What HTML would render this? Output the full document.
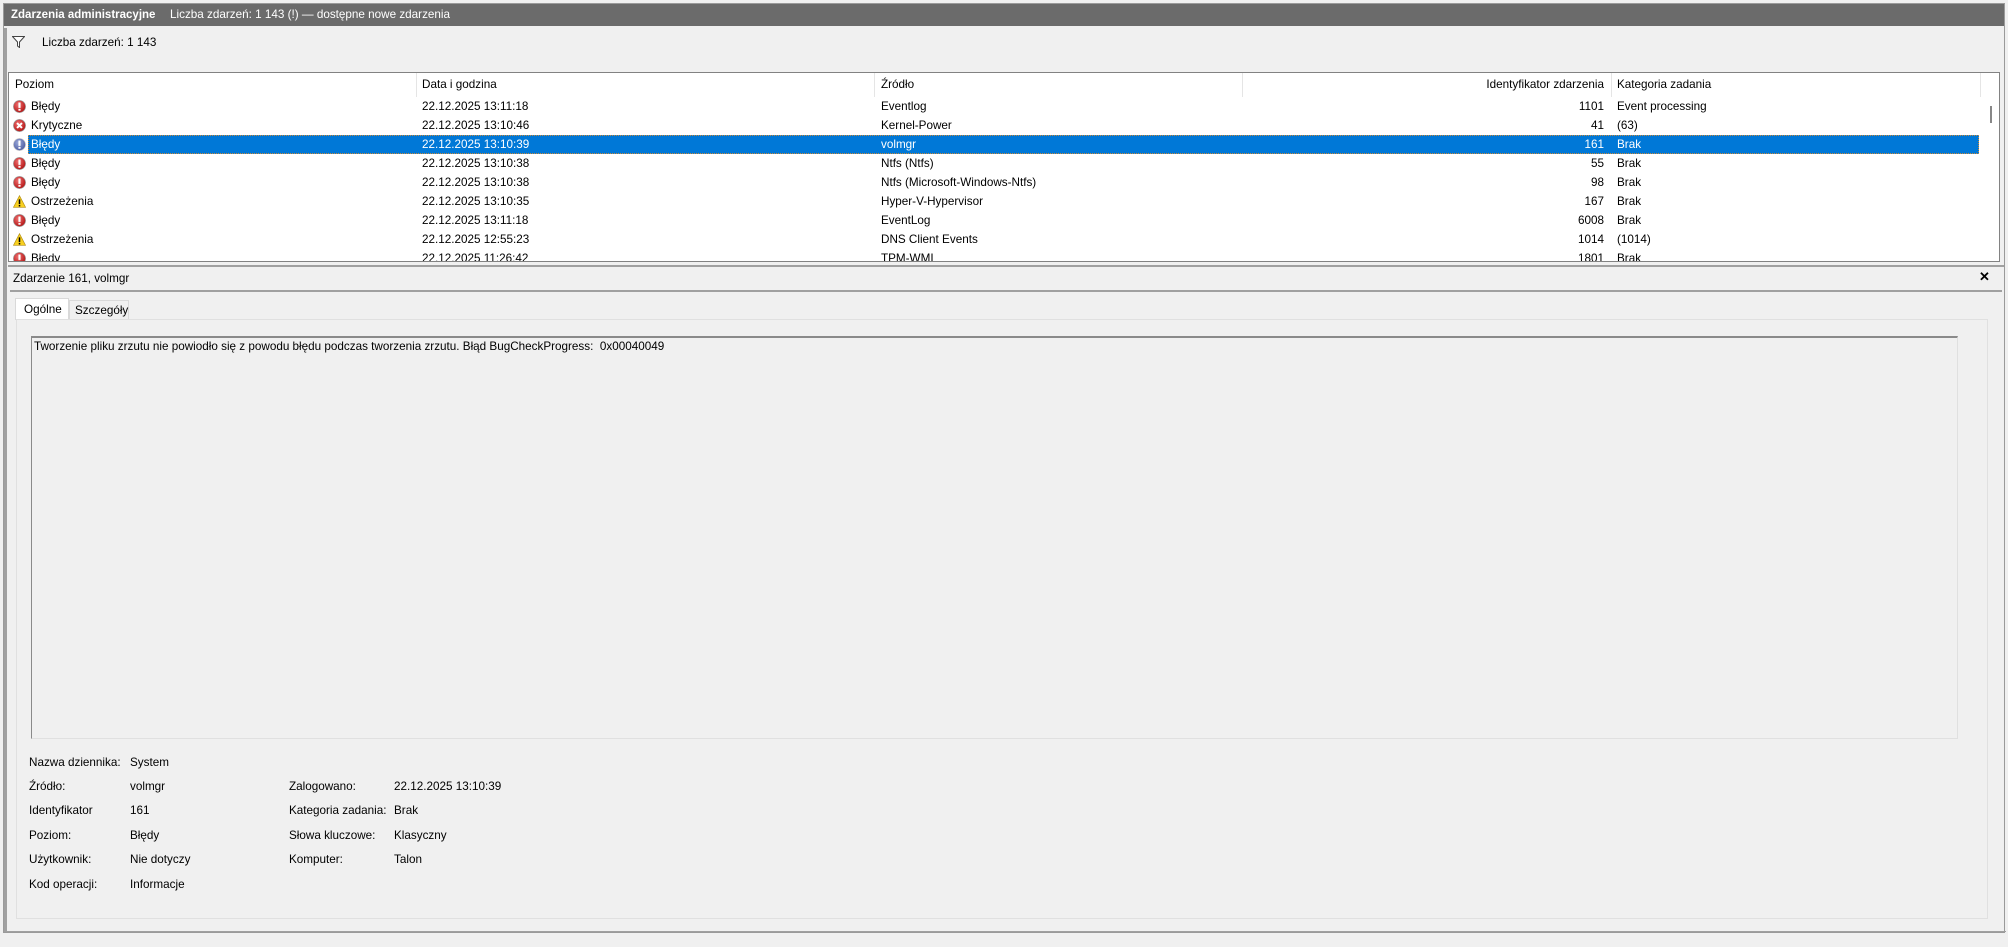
<!DOCTYPE html>
<html><head><meta charset="utf-8">
<style>
*{margin:0;padding:0;box-sizing:border-box}
body{width:2008px;height:947px;background:#f0f0f0;font-family:"Liberation Sans",sans-serif;font-size:11.7px;color:#000;position:relative;overflow:hidden}
.a{position:absolute;white-space:nowrap}
.row{position:absolute;left:9px;width:1970px;height:19px;line-height:19px}
.row .a{top:0}
.sel{background:#0078d7;color:#fff;outline:1px dotted #c98a3a;outline-offset:-1px}
.ic{position:absolute;left:13px;top:3px;width:13px;height:13px}
.r{text-align:right;width:200px}
</style></head><body>
<div class="a" style="left:3px;top:3px;width:2002px;height:930px;border:1px solid #9a9a9a;background:#f0f0f0"></div>
<div class="a" style="left:4px;top:4px;width:2000px;height:22px;background:#6b6b6b;color:#fff;line-height:22px">
 <span style="position:absolute;left:7px;font-weight:bold;font-size:11.5px">Zdarzenia administracyjne</span>
 <span style="position:absolute;left:166px">Liczba zdarzeń: 1 143 (!) — dostępne nowe zdarzenia</span>
</div>
<div class="a" style="left:4px;top:28px;width:3px;height:903px;background:#a0a0a0"></div>
<svg class="a" style="left:12px;top:36px" width="13" height="12" viewBox="0 0 13 12"><path d="M0.5 0.5H12.5L7.5 6V11.5L5.5 10V6Z" fill="#fff" stroke="#444"/></svg>
<div class="a" style="left:42px;top:36px">Liczba zdarzeń: 1 143</div>
<div class="a" style="left:8px;top:72px;width:1992px;height:190px;background:#fff;border:1px solid #828282"></div>
<div class="a" style="left:416px;top:73px;width:1px;height:24px;background:#e5e5e5"></div>
<div class="a" style="left:874px;top:73px;width:1px;height:24px;background:#e5e5e5"></div>
<div class="a" style="left:1242px;top:73px;width:1px;height:24px;background:#e5e5e5"></div>
<div class="a" style="left:1611px;top:73px;width:1px;height:24px;background:#e5e5e5"></div>
<div class="a" style="left:1980px;top:73px;width:1px;height:24px;background:#e5e5e5"></div>
<div class="a" style="left:15px;top:78px">Poziom</div>
<div class="a" style="left:422px;top:78px">Data i godzina</div>
<div class="a" style="left:881px;top:78px">Źródło</div>
<div class="a r" style="left:1404px;top:78px">Identyfikator zdarzenia</div>
<div class="a" style="left:1617px;top:78px">Kategoria zadania</div>
<div class="a" style="left:1982px;top:98px;width:17px;height:163px;background:#fff"></div>
<div class="a" style="left:1990px;top:106px;width:2px;height:17px;background:#888"></div>
<div class="a" style="left:9px;top:97px;width:1972px;height:164px;overflow:hidden">
<div style="position:absolute;left:-9px;top:-97px;width:2000px;height:400px">
<svg width="0" height="0" style="position:absolute"><defs>
<radialGradient id="rg" cx="40%" cy="35%" r="70%"><stop offset="0" stop-color="#f07070"/><stop offset="1" stop-color="#b01010"/></radialGradient>
<radialGradient id="bg" cx="40%" cy="35%" r="70%"><stop offset="0" stop-color="#9aa8d8"/><stop offset="1" stop-color="#4a5aa0"/></radialGradient>
<symbol id="err" viewBox="0 0 12 12"><circle cx="6" cy="6" r="5.6" fill="url(#rg)" stroke="#999" stroke-width=".6"/><rect x="5" y="2.3" width="2" height="5" fill="#fff"/><rect x="5" y="8.2" width="2" height="1.7" fill="#fff"/></symbol>
<symbol id="errb" viewBox="0 0 12 12"><circle cx="6" cy="6" r="5.6" fill="url(#bg)" stroke="#ccc" stroke-width=".6"/><rect x="5" y="2.3" width="2" height="5" fill="#fff"/><rect x="5" y="8.2" width="2" height="1.7" fill="#fff"/></symbol>
<symbol id="crit" viewBox="0 0 12 12"><circle cx="6" cy="6" r="5.6" fill="url(#rg)" stroke="#999" stroke-width=".6"/><path d="M3.7 3.7L8.3 8.3M8.3 3.7L3.7 8.3" stroke="#fff" stroke-width="1.8"/></symbol>
<symbol id="warn" viewBox="0 0 12 12"><path d="M6 0.6L11.6 11.4H0.4Z" fill="#f8d020" stroke="#b08a10" stroke-width=".6"/><rect x="5.3" y="4" width="1.4" height="4.4" fill="#000"/><rect x="5.3" y="9.2" width="1.4" height="1.4" fill="#000"/></symbol>
</defs></svg>
<div class="row" style="top:97px"><svg class="ic" style="left:4px"><use href="#err"/></svg><span class="a" style="left:22px">Błędy</span><span class="a" style="left:413px">22.12.2025 13:11:18</span><span class="a" style="left:872px">Eventlog</span><span class="a r" style="left:1395px">1101</span><span class="a" style="left:1608px">Event processing</span></div>
<div class="row" style="top:116px"><svg class="ic" style="left:4px"><use href="#crit"/></svg><span class="a" style="left:22px">Krytyczne</span><span class="a" style="left:413px">22.12.2025 13:10:46</span><span class="a" style="left:872px">Kernel-Power</span><span class="a r" style="left:1395px">41</span><span class="a" style="left:1608px">(63)</span></div>
<div class="row" style="top:135px;background:none"><svg class="ic" style="left:4px"><use href="#errb"/></svg><div class="sel" style="position:absolute;left:19px;top:0;width:1951px;height:19px"><span class="a" style="left:3px">Błędy</span><span class="a" style="left:394px">22.12.2025 13:10:39</span><span class="a" style="left:853px">volmgr</span><span class="a r" style="left:1376px">161</span><span class="a" style="left:1589px">Brak</span></div></div>
<div class="row" style="top:154px"><svg class="ic" style="left:4px"><use href="#err"/></svg><span class="a" style="left:22px">Błędy</span><span class="a" style="left:413px">22.12.2025 13:10:38</span><span class="a" style="left:872px">Ntfs (Ntfs)</span><span class="a r" style="left:1395px">55</span><span class="a" style="left:1608px">Brak</span></div>
<div class="row" style="top:173px"><svg class="ic" style="left:4px"><use href="#err"/></svg><span class="a" style="left:22px">Błędy</span><span class="a" style="left:413px">22.12.2025 13:10:38</span><span class="a" style="left:872px">Ntfs (Microsoft-Windows-Ntfs)</span><span class="a r" style="left:1395px">98</span><span class="a" style="left:1608px">Brak</span></div>
<div class="row" style="top:192px"><svg class="ic" style="left:4px"><use href="#warn"/></svg><span class="a" style="left:22px">Ostrzeżenia</span><span class="a" style="left:413px">22.12.2025 13:10:35</span><span class="a" style="left:872px">Hyper-V-Hypervisor</span><span class="a r" style="left:1395px">167</span><span class="a" style="left:1608px">Brak</span></div>
<div class="row" style="top:211px"><svg class="ic" style="left:4px"><use href="#err"/></svg><span class="a" style="left:22px">Błędy</span><span class="a" style="left:413px">22.12.2025 13:11:18</span><span class="a" style="left:872px">EventLog</span><span class="a r" style="left:1395px">6008</span><span class="a" style="left:1608px">Brak</span></div>
<div class="row" style="top:230px"><svg class="ic" style="left:4px"><use href="#warn"/></svg><span class="a" style="left:22px">Ostrzeżenia</span><span class="a" style="left:413px">22.12.2025 12:55:23</span><span class="a" style="left:872px">DNS Client Events</span><span class="a r" style="left:1395px">1014</span><span class="a" style="left:1608px">(1014)</span></div>
<div class="row" style="top:249px"><svg class="ic" style="left:4px"><use href="#err"/></svg><span class="a" style="left:22px">Błędy</span><span class="a" style="left:413px">22.12.2025 11:26:42</span><span class="a" style="left:872px">TPM-WMI</span><span class="a r" style="left:1395px">1801</span><span class="a" style="left:1608px">Brak</span></div>
</div></div>
<div class="a" style="left:8px;top:265px;width:1996px;height:2px;background:#a0a0a0"></div>
<div class="a" style="left:13px;top:272px">Zdarzenie 161, volmgr</div>
<div class="a" style="left:1979px;top:269px;font-weight:bold;font-size:13px">✕</div>
<div class="a" style="left:10px;top:290px;width:1992px;height:2px;background:#a0a0a0"></div>
<div class="a" style="left:15px;top:298px;width:54px;height:22px;background:#fff;border:1px solid #d9d9d9;border-bottom:none;padding:4px 0 0 8px">Ogólne</div>
<div class="a" style="left:69px;top:300px;width:60px;height:20px;border:1px solid #d9d9d9;border-bottom:none;padding:3px 0 0 5px">Szczegóły</div>
<div class="a" style="left:16px;top:319px;width:1972px;height:600px;border:1px solid #e0e0e0;background:#f0f0f0"></div>
<div class="a" style="left:31px;top:336px;width:1927px;height:403px;border-top:2px solid #8a8a8a;border-left:1px solid #8a8a8a;border-right:1px solid #e0e0e0;border-bottom:1px solid #e0e0e0"></div>
<div class="a" style="left:34px;top:340px">Tworzenie pliku zrzutu nie powiodło się z powodu błędu podczas tworzenia zrzutu. Błąd BugCheckProgress:&nbsp; 0x00040049</div>
<div class="a" style="left:29px;top:756px">Nazwa dziennika:</div><div class="a" style="left:130px;top:756px">System</div>
<div class="a" style="left:29px;top:780px">Źródło:</div><div class="a" style="left:130px;top:780px">volmgr</div>
<div class="a" style="left:29px;top:804px">Identyfikator</div><div class="a" style="left:130px;top:804px">161</div>
<div class="a" style="left:29px;top:829px">Poziom:</div><div class="a" style="left:130px;top:829px">Błędy</div>
<div class="a" style="left:29px;top:853px">Użytkownik:</div><div class="a" style="left:130px;top:853px">Nie dotyczy</div>
<div class="a" style="left:29px;top:878px">Kod operacji:</div><div class="a" style="left:130px;top:878px">Informacje</div>
<div class="a" style="left:289px;top:780px">Zalogowano:</div><div class="a" style="left:394px;top:780px">22.12.2025 13:10:39</div>
<div class="a" style="left:289px;top:804px">Kategoria zadania:</div><div class="a" style="left:394px;top:804px">Brak</div>
<div class="a" style="left:289px;top:829px">Słowa kluczowe:</div><div class="a" style="left:394px;top:829px">Klasyczny</div>
<div class="a" style="left:289px;top:853px">Komputer:</div><div class="a" style="left:394px;top:853px">Talon</div>
<div class="a" style="left:4px;top:931px;width:2002px;height:1px;background:#a0a0a0"></div>
</body></html>
